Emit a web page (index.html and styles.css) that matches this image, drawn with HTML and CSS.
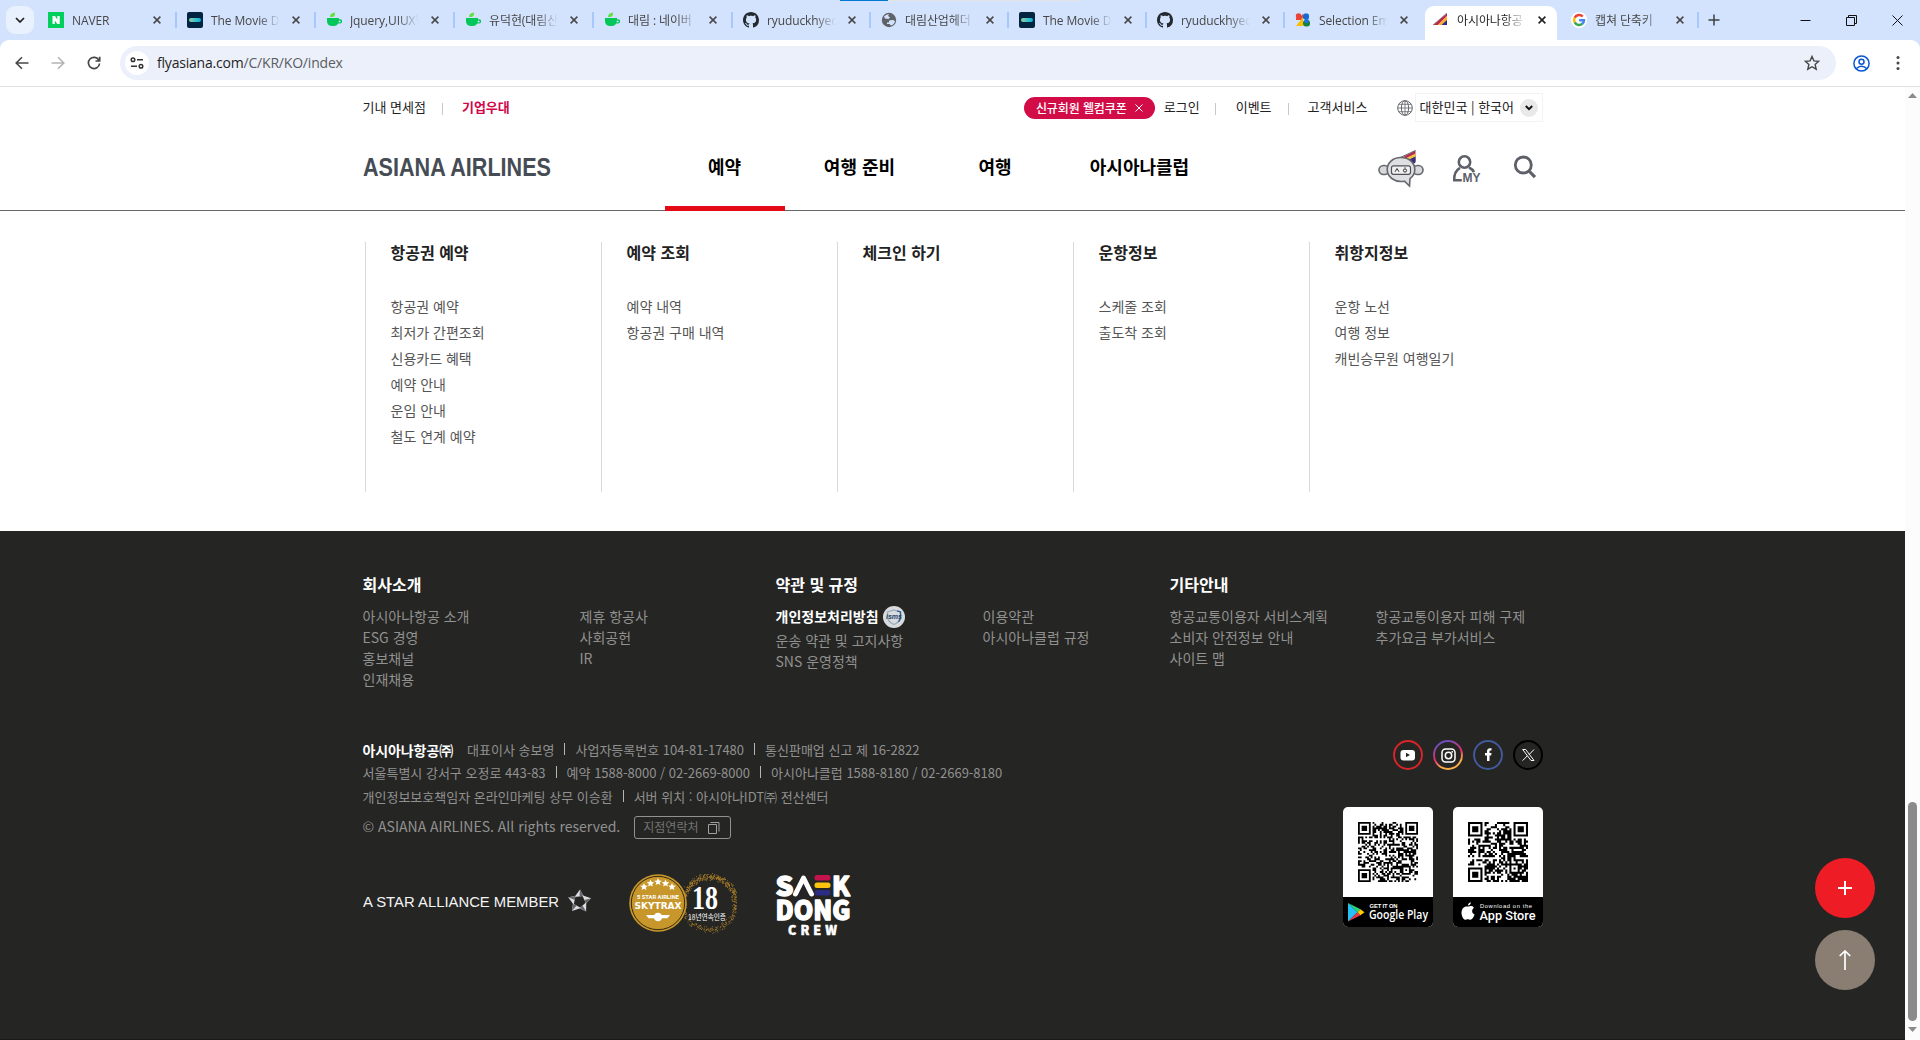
FILE: index.html
```html
<!DOCTYPE html>
<html lang="ko">
<head>
<meta charset="utf-8">
<title>아시아나항공</title>
<link rel="stylesheet" href="styles.css">
</head>
<body>
<svg class="defs" width="0" height="0" aria-hidden="true">
  <symbol id="close" viewBox="0 0 8 8"><path d="M.6.6l6.8 6.8M7.4.6L.6 7.4" fill="none" stroke="currentColor" stroke-width="1.5"/></symbol>
  <symbol id="tmdb" viewBox="0 0 16 16"><rect width="16" height="16" rx="2" fill="#032541"/><rect x="2" y="6" width="12" height="4" rx="2" fill="url(#tm)"/></symbol>
  <symbol id="cup" viewBox="0 0 16 16"><path d="M1 6h12v1.200h1a2 2 0 0 1 0 4.300h-1.800A5 5 0 0 1 8.500 14h-3A5 5 0 0 1 1 9.500z" fill="#03c75a"/><circle cx="13.600" cy="9.400" r="1" fill="#d3e3fd"/><path d="M4 5c0-3 2-4 5-4.500C9.500 3 8 5 6 5z" fill="#63e141"/></symbol>
  <symbol id="github" viewBox="0 0 16 16"><path fill="#24292f" d="M8 0C3.580 0 0 3.580 0 8c0 3.540 2.290 6.530 5.470 7.590.4.070.55-.17.55-.38 0-.19-.01-.82-.01-1.490-2.010.37-2.530-.49-2.690-.94-.09-.23-.48-.94-.82-1.130-.28-.15-.68-.52-.01-.53.63-.01 1.080.58 1.230.82.72 1.210 1.870.87 2.330.66.07-.52.28-.87.51-1.070-1.780-.2-3.640-.89-3.640-3.950 0-.87.31-1.590.82-2.150-.08-.2-.36-1.020.08-2.120 0 0 .67-.21 2.200.82.64-.18 1.320-.27 2-.27s1.360.09 2 .27c1.530-1.040 2.200-.82 2.200-.82.44 1.100.16 1.920.08 2.120.51.56.82 1.270.82 2.150 0 3.070-1.870 3.750-3.650 3.950.29.25.54.73.54 1.480 0 1.070-.01 1.930-.01 2.200 0 .21.15.46.55.38A8.010 8.010 0 0 0 16 8c0-4.420-3.580-8-8-8z"/></symbol>
  <linearGradient id="tm"><stop offset="0" stop-color="#90cea1"/><stop offset="1" stop-color="#01b4e4"/></linearGradient>
</svg>

<header class="browser">
  <i class="load"></i>
  <div class="tabs">
    <button class="tab-search"><svg width="10" height="6" viewBox="0 0 10 6"><path d="M1 1l4 4 4-4" fill="none" stroke="#1f1f1f" stroke-width="1.700"/></svg></button>
    <div class="tab wide"><svg class="fav" viewBox="0 0 16 16"><rect width="16" height="16" fill="#03cf5d"/><path d="M4.500 4H7l2.300 3.500V4h2.400v8H9.300L6.900 8.500V12H4.500z" fill="#fff"/></svg><span class="tt">NAVER</span><svg class="cx"><use href="#close"/></svg></div>
    <div class="tab wide"><svg class="fav"><use href="#tmdb"/></svg><span class="tt">The Movie Database</span><svg class="cx"><use href="#close"/></svg></div>
    <div class="tab wide"><svg class="fav"><use href="#cup"/></svg><span class="tt">Jquery,UIUX웹</span><svg class="cx"><use href="#close"/></svg></div>
    <div class="tab wide"><svg class="fav"><use href="#cup"/></svg><span class="tt">유덕현(대림산업</span><svg class="cx"><use href="#close"/></svg></div>
    <div class="tab wide"><svg class="fav"><use href="#cup"/></svg><span class="tt">대림 : 네이버 카페</span><svg class="cx"><use href="#close"/></svg></div>
    <div class="tab"><svg class="fav"><use href="#github"/></svg><span class="tt">ryuduckhyeon</span><svg class="cx"><use href="#close"/></svg></div>
    <div class="tab"><svg class="fav" viewBox="0 0 16 16"><circle cx="8" cy="8" r="7.200" fill="#5f6368"/><path d="M3 4.500C4.500 3 6 2 8 2.200L7 4l2 1.200L7.500 7 4 6.500zM8 8.500l4-.5 2 1c-.5 2.500-2 4-4 4.600L8.500 12H6v-1.500h2z" fill="#d3e3fd"/></svg><span class="tt">대림산업헤더</span><svg class="cx"><use href="#close"/></svg></div>
    <div class="tab"><svg class="fav"><use href="#tmdb"/></svg><span class="tt">The Movie Database</span><svg class="cx"><use href="#close"/></svg></div>
    <div class="tab"><svg class="fav"><use href="#github"/></svg><span class="tt">ryuduckhyeon</span><svg class="cx"><use href="#close"/></svg></div>
    <div class="tab nosep"><svg class="fav" viewBox="0 0 16 16"><path d="M1 8V6l4-1 3-3v6z" fill="#ea4335"/><circle cx="3.600" cy="4" r="2.800" fill="#ea4335"/><path d="M1 14L8 5v9z" fill="#fbbc04"/><rect x="8" y="1.500" width="6" height="6" rx="2" fill="#1967d2"/><rect x="8" y="8" width="7" height="6.500" rx="3" fill="#188038"/><circle cx="11.500" cy="9" r="2.200" fill="#1a73e8"/></svg><span class="tt">Selection Empty</span><svg class="cx"><use href="#close"/></svg></div>
    <div class="tab active nosep"><svg class="fav" viewBox="0 0 16 16"><path d="M0 13L14 1v3L5 13z" fill="#c4214c"/><path d="M5 13l9-9v4.500L9 13z" fill="#f3b229"/><path d="M8.500 13L14 8v5z" fill="#302a86"/><path d="M0 13L14 1" stroke="#8d8f94"/></svg><span class="tt">아시아나항공</span><svg class="cx"><use href="#close"/></svg></div>
    <div class="tab"><svg class="fav" viewBox="0 0 16 16"><circle cx="8" cy="8" r="8" fill="#fff"/><g fill="none" stroke-width="2.500"><path d="M11.800 4.500A5 5 0 0 0 3.700 5.600" stroke="#ea4335"/><path d="M3.700 5.600a5 5 0 0 0 0 4.800" stroke="#fbbc05"/><path d="M3.700 10.400a5 5 0 0 0 7.600 1.400" stroke="#34a853"/><path d="M11.300 11.800A5 5 0 0 0 13 8.200H8.200" stroke="#4285f4"/></g></svg><span class="tt">캡쳐 단축키</span><svg class="cx"><use href="#close"/></svg></div>
    <svg class="newtab" viewBox="0 0 12 12"><path d="M6 .5v11M.5 6h11" stroke="#3c4043" stroke-width="1.500"/></svg>
    <div class="winbtns">
      <svg width="11" height="11" viewBox="0 0 11 11"><path d="M.5 5.500h10" stroke="#111"/></svg>
      <svg width="11" height="11" viewBox="0 0 11 11" fill="none" stroke="#111"><path d="M.5 2.500h8v8h-8zM2.500 2.500v-2h8v8h-2"/></svg>
      <svg width="11" height="11" viewBox="0 0 11 11"><path d="M.5.5l10 10M10.500.5l-10 10" stroke="#111"/></svg>
    </div>
  </div>
  <div class="toolbar">
    <div class="navbtns">
      <svg width="14" height="14" viewBox="0 0 14 14" fill="none" stroke="#474747" stroke-width="1.600"><path d="M13.500 7H1.500M7 1.200L1.200 7 7 12.800"/></svg>
      <svg width="14" height="14" viewBox="0 0 14 14" fill="none" stroke="#b4b4b4" stroke-width="1.600"><path d="M.5 7h12M7 1.200L12.800 7 7 12.800"/></svg>
      <svg width="14" height="14" viewBox="0 0 14 14" fill="none" stroke="#474747" stroke-width="1.700"><path d="M12 4.300A5.600 5.600 0 1 0 12.600 7.500M12.700.8v4.200H8.500"/></svg>
    </div>
    <div class="omni">
      <span class="tune"><svg width="14" height="12" viewBox="0 0 14 12" fill="none" stroke="#333" stroke-width="1.500"><circle cx="3" cy="2.700" r="1.800"/><path d="M7 2.700h6M1 9.300h6"/><circle cx="11" cy="9.300" r="1.800"/></svg></span>
      <span class="url">flyasiana.com<em>/C/KR/KO/index</em></span>
      <svg class="star" width="16" height="16" viewBox="0 0 16 16"><path d="M8 1.500l1.900 4.400 4.800.4-3.600 3.200 1.100 4.700L8 11.700l-4.200 2.500 1.100-4.700L1.300 6.300l4.800-.4z" fill="none" stroke="#474747" stroke-width="1.400"/></svg>
    </div>
    <svg class="me" width="17" height="17" viewBox="0 0 17 17" fill="none" stroke="#0b57d0" stroke-width="1.500"><circle cx="8.500" cy="8.500" r="7.600"/><circle cx="8.500" cy="6.700" r="2.500"/><path d="M3.500 13.500c2.500-3 7.500-3 10 0"/></svg>
    <svg class="dots" width="4" height="16" viewBox="0 0 4 16" fill="#474747"><circle cx="2" cy="2.500" r="1.500"/><circle cx="2" cy="8" r="1.500"/><circle cx="2" cy="13.500" r="1.500"/></svg>
  </div>
</header>

<div class="view">
<main class="page">
  <div class="wrap util">
    <a>기내 면세점</a><i class="bar b1"></i><a class="corp">기업우대</a>
    <a class="coupon">신규회원 웰컴쿠폰<svg width="8" height="8" viewBox="0 0 8 8"><path d="M.5.5l7 7M7.500.5l-7 7" stroke="#fff"/></svg></a>
    <a class="login">로그인</a><i class="bar b2"></i><a>이벤트</a><i class="bar b3"></i><a>고객서비스</a>
    <svg class="globe" width="16" height="16" viewBox="0 0 16 16" fill="none" stroke="#63656b"><circle cx="8" cy="8" r="7.300"/><ellipse cx="8" cy="8" rx="3.600" ry="7.300"/><path d="M8 .7v14.600M.7 8h14.600M1.800 4.300h12.400M1.800 11.700h12.400" stroke-width=".8"/></svg>
    <div class="lang"><a>대한민국 | 한국어</a><span><svg width="8" height="6" viewBox="0 0 8 6"><path d="M.8 1L4 4.200 7.200 1" fill="none" stroke="#111" stroke-width="2"/></svg></span></div>
  </div>
  <div class="gnb">
    <div class="wrap gnb-in">
      <svg class="logo" width="190" height="24" viewBox="0 0 190 24"><text x="0" y="20" textLength="188" lengthAdjust="spacingAndGlyphs">ASIANA AIRLINES</text></svg>
      <nav><a class="on n1">예약</a><a class="n2">여행 준비</a><a class="n3">여행</a><a class="n4">아시아나클럽</a></nav>
      <div class="tools">
        <svg width="46" height="38" viewBox="0 0 46 38"><path d="M22 8.500L37.500.5V11l-2 3z" fill="#b8274f"/><path d="M26 9l11.500-5.500V9l-4 3z" fill="#f3c14c"/><path d="M30 10l7.500-3.500v6L35 14z" fill="#372e7c"/><path d="M20 8.500L37.500.5" stroke="#606168" fill="none"/><rect x="1" y="15.500" width="10" height="9" rx="4.500" fill="#d8d8da" stroke="#66686e" stroke-width="1.600"/><rect x="35" y="15.500" width="10" height="9" rx="4.500" fill="#d8d8da" stroke="#66686e" stroke-width="1.600"/><path d="M23 7.500c8.500 0 13.800 5.500 13.800 12 0 3.700-1.800 7-4.800 9.200l-.5 7.300-5-4.800c-10 1.600-17.300-4.200-17.300-11.700 0-6.500 5.300-12 13.800-12z" fill="#dedfe0" stroke="#66686e" stroke-width="1.600"/><rect x="13.500" y="15.800" width="19" height="8.500" rx="2" fill="#f0f0f0" stroke="#505158" stroke-width="1.200"/><path d="M17 21.800l2-3.300 2 3.300M27 17.300v1" fill="none" stroke="#333"/><circle cx="27" cy="20.500" r="1.600" fill="none" stroke="#333"/></svg>
        <svg width="30" height="30" viewBox="0 0 30 30"><g fill="none" stroke="#5d6068" stroke-width="2.600"><circle cx="12.500" cy="8" r="5.700"/><path d="M9.800 26.200H2.300c-.5-6 1.800-10 5.700-12.400M17 13.500c2.500 1.200 4 2.700 5 4.700"/></g><text class="my" x="10.500" y="27.500" textLength="18">MY</text></svg>
        <svg width="24" height="24" viewBox="0 0 24 24" fill="none" stroke="#5d6068" stroke-width="2.800"><circle cx="10.300" cy="10" r="8"/><path d="M16 16l6 6.200" stroke-width="3.200"/></svg>
      </div>
    </div>
  </div>
  <div class="wrap mega">
    <section><h3>항공권 예약</h3><a>항공권 예약</a><a>최저가 간편조회</a><a>신용카드 혜택</a><a>예약 안내</a><a>운임 안내</a><a>철도 연계 예약</a></section>
    <section><h3>예약 조회</h3><a>예약 내역</a><a>항공권 구매 내역</a></section>
    <section><h3>체크인 하기</h3></section>
    <section><h3>운항정보</h3><a>스케줄 조회</a><a>출도착 조회</a></section>
    <section><h3>취항지정보</h3><a>운항 노선</a><a>여행 정보</a><a>캐빈승무원 여행일기</a></section>
  </div>

  <footer>
    <div class="wrap links">
      <section class="l1"><h4>회사소개</h4><div><p><a>아시아나항공 소개</a><a>ESG 경영</a><a>홍보채널</a><a>인재채용</a></p><p><a>제휴 항공사</a><a>사회공헌</a><a>IR</a></p></div></section>
      <section class="l2"><h4>약관 및 규정</h4><div><p><a class="privacy">개인정보처리방침<svg width="22" height="22" viewBox="0 0 22 22"><circle cx="11" cy="11" r="11" fill="#d9dbde"/><path d="M11 4l6.500 2v5c0 4-3 6-6.500 7.500C7.500 17 4.500 15 4.500 11V6z" fill="none" stroke="#9aacbb" stroke-width="1.300"/><path d="M14 4.900l3.500 1.100v5c0 2-.8 3.500-2 4.700" fill="none" stroke="#2a5c8d" stroke-width="1.300"/><text x="3" y="13" textLength="16" lengthAdjust="spacingAndGlyphs" class="isms">isms</text></svg></a><a>운송 약관 및 고지사항</a><a>SNS 운영정책</a></p><p><a>이용약관</a><a>아시아나클럽 규정</a></p></div></section>
      <section class="l3"><h4>기타안내</h4><div><p><a>항공교통이용자 서비스계획</a><a>소비자 안전정보 안내</a><a>사이트 맵</a></p><p><a>항공교통이용자 피해 구제</a><a>추가요금 부가서비스</a></p></div></section>
    </div>
    <div class="wrap bottom">
      <div class="info">
        <div class="row"><b>아시아나항공㈜</b><span>대표이사 송보영</span><i></i><span>사업자등록번호 104-81-17480</span><i></i><span>통신판매업 신고 제 16-2822</span></div>
        <div class="row"><span>서울특별시 강서구 오정로 443-83</span><i></i><span>예약 1588-8000 / 02-2669-8000</span><i></i><span>아시아나클럽 1588-8180 / 02-2669-8180</span></div>
        <div class="row"><span>개인정보보호책임자 온라인마케팅 상무 이승환</span><i></i><span>서버 위치 : 아시아나IDT㈜ 전산센터</span></div>
        <div class="copy"><span>© ASIANA AIRLINES. All rights reserved.</span><a><span>지점연락처</span><svg width="12" height="12" viewBox="0 0 12 12" fill="none" stroke="#a0a09f"><path d="M.5 2.500h8v9h-8zM2.500.5h8.500v9"/></svg></a></div>
        <div class="logos">
          <svg width="230" height="28" viewBox="0 0 230 28"><text class="alliance" x="0" y="18" textLength="196" lengthAdjust="spacingAndGlyphs">A STAR ALLIANCE MEMBER</text><g transform="translate(216.500 12.500)"><g id="blade"><path d="M.5-12L4-5.500-5-4.500z" fill="#dcdde0"/><path d="M.5-12L4-5.500l-4 .5z" fill="#66686d"/></g><use href="#blade" transform="rotate(72)"/><use href="#blade" transform="rotate(144)"/><use href="#blade" transform="rotate(216)"/><use href="#blade" transform="rotate(288)"/></g></svg>
          <svg class="sky" width="108" height="64" viewBox="0 0 108 64"><g id="sparks" fill="#b1842a"></g><circle cx="29" cy="31" r="28.800" fill="#c7972c"/><circle cx="29" cy="31" r="26.700" fill="none" stroke="#33290f"/><g fill="#fff"><path id="s" d="M29 6l1.100 2.500 2.700.2-2.100 1.800.7 2.600-2.400-1.400-2.400 1.400.7-2.600-2.100-1.800 2.700-.2z"/><use href="#s" x="-7.500" y="1.500"/><use href="#s" x="7.500" y="1.500"/><use href="#s" x="-14" y="5"/><use href="#s" x="14" y="5"/><path d="M17 43h24l-2.500 3.300H33a4.200 4.200 0 0 1-8 0h-5.500z"/><circle cx="29" cy="44.500" r="3.800"/></g><text class="s5" x="8" y="26.500" textLength="42" lengthAdjust="spacingAndGlyphs">5 STAR AIRLINE</text><text class="st" x="5.500" y="37" textLength="47" lengthAdjust="spacingAndGlyphs">SKYTRAX</text><text class="n18" x="63" y="37" textLength="26" lengthAdjust="spacingAndGlyphs">18</text><text class="yr" x="59" y="47.500" textLength="38" lengthAdjust="spacingAndGlyphs">18년연속인증</text></svg>
          <svg class="saek" width="76" height="64" viewBox="0 0 76 64"><text x=".5" y="22.500" textLength="18" lengthAdjust="spacingAndGlyphs">S</text><path d="M20.500 21L28.500 5l8 16" fill="none" stroke="#fff" stroke-width="5" stroke-linecap="round" stroke-linejoin="round"/><rect x="39.500" y="2" width="16" height="5.500" rx="2.500" fill="#c4134d"/><rect x="39.500" y="9.500" width="16" height="5.500" rx="2.500" fill="#fcc30f"/><rect x="39.500" y="17" width="16" height="5.500" rx="2.500" fill="#2b2d83"/><text x="57" y="22.500" textLength="18" lengthAdjust="spacingAndGlyphs">K</text><text x=".5" y="47" textLength="75" lengthAdjust="spacingAndGlyphs">DONG</text><text class="crew" x="13" y="61.500" textLength="49">CREW</text></svg>
        </div>
      </div>
      <div class="side">
        <div class="sns">
          <svg width="30" height="30" viewBox="0 0 30 30"><circle cx="15" cy="15" r="14" fill="none" stroke="#d9252a" stroke-width="2"/><rect x="7.500" y="10" width="14.500" height="10.500" rx="3" fill="#fff"/><path d="M13 12.800v4.400l4-2.200z" fill="#252524"/></svg>
          <svg width="30" height="30" viewBox="0 0 30 30"><linearGradient id="ig" x1=".2" y1="0" x2=".6" y2="1"><stop offset="0" stop-color="#5b51c5"/><stop offset=".55" stop-color="#e1306c"/><stop offset=".85" stop-color="#fcaf45"/></linearGradient><circle cx="15" cy="15" r="14" fill="none" stroke="url(#ig)" stroke-width="2"/><g fill="none" stroke="#fff" stroke-width="1.500"><rect x="9" y="9" width="13" height="13" rx="3.500"/><circle cx="15.500" cy="15.500" r="3.200"/></g><circle cx="19.200" cy="11.800" r=".9" fill="#fff"/></svg>
          <svg width="30" height="30" viewBox="0 0 30 30"><circle cx="15" cy="15" r="14" fill="none" stroke="#42599b" stroke-width="2"/><path d="M14 21v-5.500h-2V13h2v-1.700C14 9.200 15.300 8.200 17 8.200l1.500.1v2.200h-1c-.8 0-1 .4-1 1V13h2l-.3 2.500h-1.700V21z" fill="#fff"/></svg>
          <svg width="30" height="30" viewBox="0 0 30 30"><circle cx="15" cy="15" r="14" fill="none" stroke="#000" stroke-width="2"/><g fill="none" stroke="#fff"><path d="M9.700 9.500h3l8.300 11h-3z"/><path d="M21 9.500l-5 5.200M14.200 16l-4.600 4.600"/></g></svg>
        </div>
        <div class="stores">
          <div class="store"><svg class="qr" data-n="33" data-seed="7" width="60" height="60"></svg><div class="cap"><svg width="90" height="30" viewBox="0 0 90 30"><path d="M5 6v18.500l9.500-9.300z" fill="#23c1f4"/><path d="M5 6l9.500 9.200 3-3z" fill="#2bd67b"/><path d="M5 24.500l9.500-9.300 3 3z" fill="#f0364b"/><path d="M17.500 12.200l4 3-4 3-3-3z" fill="#fdcb0a"/><text class="c1 get" x="26.500" y="10.500" textLength="28">GET IT ON</text><text class="c2 gp" x="26" y="22.300" textLength="59" lengthAdjust="spacingAndGlyphs">Google Play</text></svg></div></div>
          <div class="store"><svg class="qr" data-n="29" data-seed="23" width="60" height="60"></svg><div class="cap"><svg width="90" height="30" viewBox="0 0 90 30"><path d="M15.500 9.500c1-.1 3.500-1.700 5.500 1.200-2.800 2-2.200 5.700.6 6.800-1 2.800-2.600 5.300-4.200 5.300-1 0-1.500-.6-2.600-.6s-1.700.6-2.500.6c-2.300 0-5.300-6.300-2.900-10.800 1.700-3 4.200-2.500 6.100-2.500zM15 8.500c-.1-1.500 1-3 2.800-3.300C18 7 16.600 8.500 15 8.500z" fill="#fff"/><text class="c1" x="27" y="10.500" textLength="52">Download on the</text><text class="c2" x="26.500" y="22.500" textLength="56" lengthAdjust="spacingAndGlyphs">App Store</text></svg></div></div>
        </div>
      </div>
    </div>
    <div class="float">
      <button class="plus"><svg width="14" height="14" viewBox="0 0 14 14"><path d="M7 0v14M0 7h14" stroke="#fff" stroke-width="2"/></svg></button>
      <button class="up"><svg width="12" height="20" viewBox="0 0 12 20"><path d="M6 20V1M.7 6L6 1l5.300 5" fill="none" stroke="#fff" stroke-width="1.700"/></svg></button>
    </div>
  </footer>
</main>
<div class="scroll"><svg width="9" height="5" viewBox="0 0 9 5"><path d="M0 5L4.500 0 9 5z" fill="#8b8b8b"/></svg><i></i><svg width="9" height="5" viewBox="0 0 9 5"><path d="M0 0h9L4.500 5z" fill="#8b8b8b"/></svg></div>
</div>
<script src="script.js"></script>
</body>
</html>
```
FILE: styles.css
```css
* { box-sizing: border-box; margin: 0; padding: 0; }
body { width: 1920px; height: 1040px; overflow: hidden; background: #fff; font-family: "Noto Sans CJK KR", sans-serif; color: #222; }
svg { flex: none; display: block; }
i, em { font-style: normal; }
button { border: 0; }
.defs { position: absolute; }

/* browser chrome */
.browser { height: 87px; background: #d3e3fd; position: relative; }
.load { position: absolute; left: 840px; top: 0; width: 240px; height: 1px; background: linear-gradient(90deg, #0078d4 48px, #e3e3e3 48px); }
.tabs { height: 40px; display: flex; align-items: center; padding-left: 6px; }
.tab-search { width: 28px; height: 28px; border-radius: 9px; background: #eaf1fe; display: grid; place-items: center; margin-right: 4px; }
.tab { width: 138px; height: 34px; margin-top: 6px; padding: 0 0 6px 10px; display: flex; align-items: center; position: relative; color: #474747; font: 12px/18px "Open Sans", "Noto Sans CJK KR", sans-serif; }
.tab.wide { width: 139px; }
.tab::after { content: ""; position: absolute; right: 0; top: 6px; width: 2px; height: 16px; background: #a8c7fa; }
.tab.nosep::after { display: none; }
.fav { width: 16px; height: 16px; margin-right: 8px; }
.tt { width: 71px; overflow: hidden; white-space: nowrap; padding-top: 2px; letter-spacing: -.1px; -webkit-mask: linear-gradient(90deg, #000 48px, transparent 69px); mask: linear-gradient(90deg, #000 48px, transparent 69px); }
.cx { width: 8px; height: 8px; margin-left: 10px; }
.tab.active { color: #1f1f1f; }
.tab.active::before { content: ""; position: absolute; z-index: 0; left: 2px; right: 4px; top: 0; bottom: 0; background: #fff; border-radius: 9px 9px 0 0; }
.tab.active > * { position: relative; }
.newtab { width: 12px; height: 12px; margin-left: 9px; }
.winbtns { display: flex; gap: 35px; margin-left: auto; padding-right: 17px; }
.toolbar { height: 47px; background: #fff; border-bottom: 1px solid #dfe1e3; border-radius: 9px 9px 0 0; display: flex; align-items: center; }
.navbtns { display: flex; gap: 22px; padding-left: 15px; width: 120px; }
.omni { width: 1716px; height: 34px; border-radius: 17px; background: #ecf0fa; display: flex; align-items: center; padding-left: 5px; }
.tune { width: 24px; height: 24px; border-radius: 50%; background: #fff; display: grid; place-items: center; }
.url { margin-left: 8px; color: #1f1f1f; font: 14px/20px "Open Sans", sans-serif; letter-spacing: -.2px; }
.url em { color: #5a5d61; }
.star { margin-left: auto; margin-right: 16px; }
.me { margin-left: 17px; }
.dots { margin-left: 26px; }

.view { display: flex; height: 953px; }
.page { width: 1905px; }
.scroll { width: 15px; background: #fcfcfc; padding: 6px 3px 8px; display: flex; flex-direction: column; }
.scroll i { height: 219px; border-radius: 5px; background: #8b8b8b; margin-top: auto; margin-bottom: 6px; }
.wrap { width: 1180px; margin: 0 auto; }

/* header */
.util { height: 41px; display: flex; align-items: center; font-size: 13px; color: #222; white-space: nowrap; }
.util a { padding-bottom: 2px; }
.bar { width: 1px; height: 12px; background: #c9c9c9; }
.b1 { margin: 2px 19px 0 16px; }
.util .corp { color: #d1084a; font-weight: 700; }
.util .coupon { margin-left: 514px; padding-bottom: 0; width: 131px; height: 22px; border-radius: 11px; background: #d20c47; color: #fff; font-size: 12px; font-weight: 500; display: flex; align-items: center; justify-content: center; gap: 8px; letter-spacing: -.1px; }
.login { margin-left: 9px; }
.b2 { margin: 2px 20px 0 15px; }
.b3 { margin: 2px 19px 0 16px; }
.globe { margin-left: auto; margin-right: 2px; }
.lang { width: 128px; height: 29px; border: 1px solid #f3f3f3; display: flex; align-items: center; padding-left: 4px; }
.lang span { width: 18px; height: 18px; border-radius: 50%; background: #e9e9e9; margin-left: 6px; display: grid; place-items: center; }
.gnb { height: 83px; border-bottom: 1px solid #66676a; }
.gnb-in { height: 82px; display: flex; align-items: center; position: relative; padding-bottom: 3px; }
.logo text { font: 700 25px "Liberation Sans", sans-serif; fill: #464c54; }
nav { display: flex; height: 82px; margin-left: 112px; margin-bottom: -3px; font-size: 18px; line-height: 76px; font-weight: 700; color: #000; white-space: nowrap; }
nav a { text-align: center; position: relative; }
nav .on::after { content: ""; position: absolute; left: 0; right: 0; bottom: -1px; height: 5px; background: #e50815; }
.n1 { width: 120px; } .n2 { width: 150px; } .n3 { width: 121px; } .n4 { width: 168px; }
.tools { margin-left: auto; display: flex; align-items: center; gap: 30px; padding-right: 6px; padding-top: 3px; }
.tools svg:nth-child(2) { margin-right: 1px; margin-left: -2px; }
.tools svg:nth-child(3) { margin-top: -4px; }
.my { font: 700 12px "Liberation Sans", sans-serif; fill: #5d6068; }

.mega { height: 320px; padding: 31px 0 0 2px; display: flex; }
.mega section { flex: none; width: 236px; height: 250px; border-left: 1px solid #d9d9d9; padding-left: 25px; }
.mega h3 { font-size: 16px; line-height: 20px; margin-bottom: 31px; font-weight: 700; }
.mega a { display: block; font-size: 14px; line-height: 26px; color: #555; }

/* footer */
footer { background: #252524; height: 509px; padding-top: 43px; color: #91918f; border-bottom: 1px solid #191918; position: relative; }
.links { display: flex; height: 164px; font-size: 14px; line-height: 21px; white-space: nowrap; }
.links h4 { color: #fff; font-size: 16px; line-height: 20px; margin-bottom: 12px; }
.links section, .links p { flex: none; }
.links section > div { display: flex; }
.links a { display: block; }
.l1 { width: 413px; } .l1 p { width: 217px; }
.l2 { width: 394px; } .l2 p { width: 207px; }
.l3 { width: 373px; } .l3 p { width: 206px; }
.links .privacy { display: flex; align-items: center; gap: 4px; height: 27px; margin-top: -3px; color: #fff; font-weight: 700; }
.isms { font: italic 700 7px "Liberation Sans", sans-serif; fill: #1f4468; }
.bottom { display: flex; justify-content: space-between; }
.row { height: 23.300px; display: flex; align-items: center; font-size: 13px; white-space: nowrap; }
.row b { color: #fff; font-size: 14px; margin-right: 14px; letter-spacing: -.1px; }
.row i { width: 1px; height: 12px; background: #b5b5b4; margin: -1px 10px 0; }
.copy { display: flex; align-items: center; margin-top: 8px; height: 24px; font-size: 14px; }
.copy span { padding-bottom: 3px; }
.copy a { margin-left: 14px; width: 97px; height: 23px; border: 1px solid #91918f; border-radius: 3px; display: flex; align-items: center; font-size: 12px; color: #747473; padding-left: 8px; gap: 10px; }
.logos { display: flex; margin-top: 32px; align-items: center; }
.logos > svg:first-child { margin-top: -2px; }
.alliance { font: 14px "Liberation Sans", sans-serif; fill: #f4f4f4; }
.sky { margin-left: 36px; }
.logos .saek { margin-left: 38px; margin-top: 1px; }
.saek text { font: 900 26px "Noto Sans CJK KR", sans-serif; fill: #fff; stroke: #fff; stroke-width: 1.300px; stroke-linejoin: round; }
.saek .crew { font-size: 12.500px; stroke-width: .5px; }
.s5 { font: 700 6px Roboto, sans-serif; fill: #fff; }
.st { font: 700 8px "DejaVu Sans", sans-serif; fill: #fff; }
.n18 { font: 700 33px "Liberation Serif", serif; fill: #fff; }
.yr { font: 7.500px "Noto Sans CJK KR", sans-serif; fill: #fff; }
.side { padding-top: 2px; display: flex; flex-direction: column; align-items: flex-end; }
.sns { display: flex; gap: 10px; }
.stores { display: flex; gap: 20px; margin-top: 37px; }
.store { width: 90px; height: 120px; border-radius: 5px; background: #fff; overflow: hidden; display: flex; flex-direction: column; align-items: center; }
.qr { margin: 15px 0; }
.cap { background: #000; height: 30px; }
.c1 { font: 5.800px "Liberation Sans", sans-serif; fill: #fff; }
.get { font-weight: 700; }
.c2 { font: 500 12.500px Roboto, sans-serif; fill: #fff; }
.gp { font: 600 12px "Open Sans", sans-serif; }
.float { position: absolute; right: 30px; top: 327px; display: flex; flex-direction: column; gap: 12px; }
.float button { width: 60px; height: 60px; border-radius: 50%; display: grid; place-items: center; }
.plus { background: #ee1c25; }
.up { background: #8a7d71; }
```
FILE: script.js
```js
function random(seed) {
  let s = seed;
  return () => (s = (s * 16807) % 2147483647) / 2147483647;
}

// Store codes: data modules plus three finder squares and one alignment square.
document.querySelectorAll('.qr').forEach((svg) => {
  const n = +svg.dataset.n;
  const rnd = random(+svg.dataset.seed * 7919);
  svg.setAttribute('viewBox', `0 0 ${n} ${n}`);
  const ring = (x, y, size) => {
    const c = Math.max(Math.abs(x), Math.abs(y));
    return size === 7 ? c !== 2 && c < 4 : c !== 1;
  };
  let d = '';
  for (let y = 0; y < n; y++) {
    for (let x = 0; x < n; x++) {
      let on = rnd() < 0.52;
      [[3, 3], [n - 4, 3], [3, n - 4]].forEach(([a, b]) => {
        if (Math.abs(x - a) < 5 && Math.abs(y - b) < 5) on = ring(x - a, y - b, 7);
      });
      if (Math.abs(x - n + 7) < 3 && Math.abs(y - n + 7) < 3) on = ring(x - n + 7, y - n + 7, 5);
      if (on) d += `M${x} ${y}h1v1h-1z`;
    }
  }
  svg.innerHTML = `<path d="${d}"/>`;
});

// Gold dust ring round the award badge.
const rnd = random(4242);
let dust = '';
for (let i = 0; i < 900; i++) {
  const a = rnd() * Math.PI * 2;
  if (Math.sin(a) > 0.2 && rnd() < 0.55) continue;
  const r = 26.5 + (rnd() + rnd() - 1) * 4;
  dust += `<rect x="${(80 + r * Math.cos(a)).toFixed(1)}" y="${(31 + r * Math.sin(a)).toFixed(1)}" width=".8" height=".8"/>`;
}
document.getElementById('sparks').innerHTML = dust;
```
